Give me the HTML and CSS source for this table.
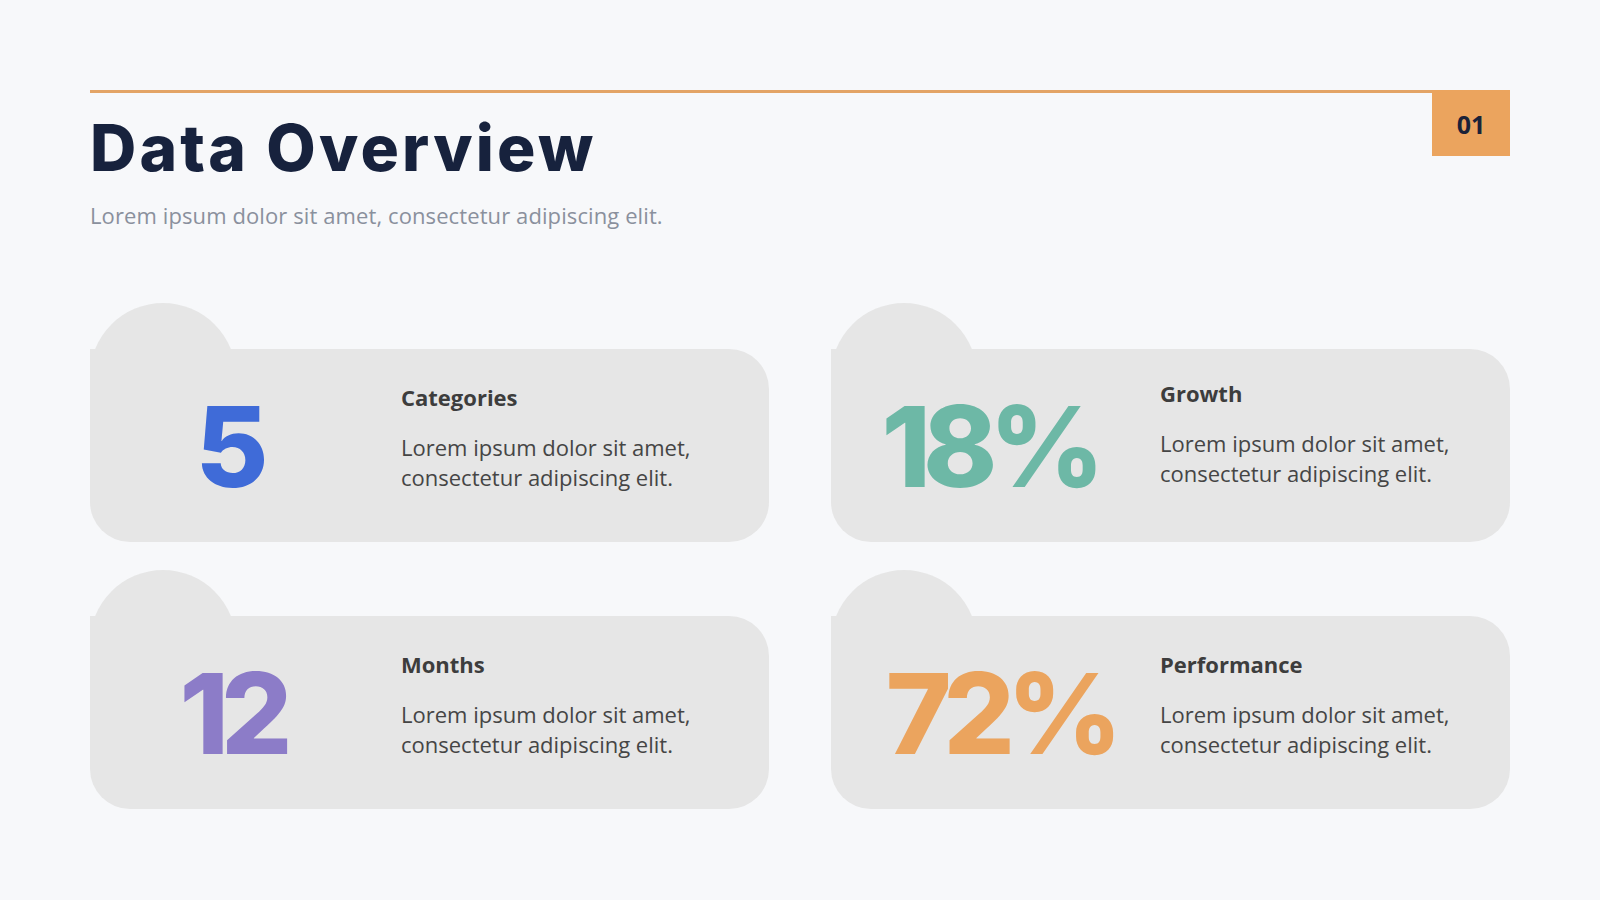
FILE: index.html
```html
<!DOCTYPE html>
<html lang="en">
<head>
<meta charset="utf-8">
<title>Data Overview</title>
<link rel="stylesheet" href="styles.css">
</head>
<body>
<main class="slide">
  <header class="header">
    <div class="header-main">
      <h1 class="title">Data Overview</h1>
      <p class="subtitle">Lorem ipsum dolor sit amet, consectetur adipiscing elit.</p>
    </div>
    <div class="badge">01</div>
  </header>

  <section class="grid">
    <article class="card card--left">
      <div class="card-body">
        <div class="num num--blue">5</div>
        <div class="text">
          <h2 class="label">Categories</h2>
          <p class="desc">Lorem ipsum dolor sit amet,<br>consectetur adipiscing elit.</p>
        </div>
      </div>
    </article>
    <article class="card card--right">
      <div class="card-body">
        <div class="num num--teal">18%</div>
        <div class="text">
          <h2 class="label label--high">Growth</h2>
          <p class="desc">Lorem ipsum dolor sit amet,<br>consectetur adipiscing elit.</p>
        </div>
      </div>
    </article>
    <article class="card card--left">
      <div class="card-body">
        <div class="num num--purple num--nudge">12</div>
        <div class="text">
          <h2 class="label">Months</h2>
          <p class="desc">Lorem ipsum dolor sit amet,<br>consectetur adipiscing elit.</p>
        </div>
      </div>
    </article>
    <article class="card card--right">
      <div class="card-body">
        <div class="num num--orange num--nudge-lg">72%</div>
        <div class="text">
          <h2 class="label">Performance</h2>
          <p class="desc">Lorem ipsum dolor sit amet,<br>consectetur adipiscing elit.</p>
        </div>
      </div>
    </article>
  </section>
</main>
</body>
</html>
```

FILE: styles.css
```css
* { box-sizing: border-box; }

html, body {
  margin: 0;
  padding: 0;
}

body {
  width: 1600px;
  height: 900px;
  background: #f7f8fa;
  font-family: "Open Sans", "Noto Sans", sans-serif;
  overflow: hidden;
}

.slide {
  padding: 90px 90px 0 90px;
}

.header {
  display: flex;
  align-items: flex-start;
}

.header-main {
  flex: 1;
  border-top: 3px solid #e3a466;
}

.title {
  margin: 23px 0 0 0;
  font-family: "Inter", sans-serif;
  font-weight: 800;
  font-size: 64px;
  line-height: 1;
  letter-spacing: 3.2px;
  color: #17223d;
}

.subtitle {
  margin: 21px 0 0 0;
  font-size: 22px;
  line-height: 28px;
  letter-spacing: 0.1px;
  color: #8a909d;
}

.badge {
  width: 78px;
  height: 66px;
  background: #eba45e;
  color: #1a2238;
  font-weight: 700;
  font-size: 25px;
  display: flex;
  align-items: center;
  justify-content: center;
  padding-top: 2px;
}

.grid {
  margin-top: 74px;
  display: grid;
  grid-template-columns: 1fr 1fr;
  column-gap: 62px;
  row-gap: 28px;
}

.card {
  position: relative;
  padding-top: 46px;
}

.card::before {
  content: "";
  position: absolute;
  left: 0;
  top: 0;
  width: 146px;
  height: 120px;
  border-radius: 73px 73px 0 0;
  background: #e6e6e6;
}

.card-body {
  position: relative;
  height: 193px;
  background: #e6e6e6;
  border-radius: 0 40px 40px 40px;
  display: grid;
  grid-template-columns: 264px 1fr;
  column-gap: 41px;
  align-items: center;
}

.card--left .card-body { padding-left: 6px; }
.card--right .card-body {
  padding-left: 28px;
  grid-template-columns: 260px 1fr;
}

.num {
  text-align: center;
  font-family: "Inter", sans-serif;
  font-weight: 800;
  font-size: 112px;
  line-height: 1;
  letter-spacing: -8px;
}

.num--nudge { padding-left: 8px; }
.num--nudge-lg { padding-left: 22px; }

.num--blue { color: #3f6bd8; }
.num--teal { color: #6db8a6; }
.num--purple { color: #8c7cc8; }
.num--orange { color: #eba45e; }

.text {
  align-self: start;
  padding-top: 34px;
}

.label {
  margin: 0;
  font-size: 22px;
  line-height: 28px;
  font-weight: 700;
  color: #3d3d3d;
}

.label--high {
  margin-top: -4px;
  margin-bottom: 4px;
}

.desc {
  margin: 21px 0 0 0;
  font-size: 22px;
  line-height: 30px;
  color: #454545;
}
```
